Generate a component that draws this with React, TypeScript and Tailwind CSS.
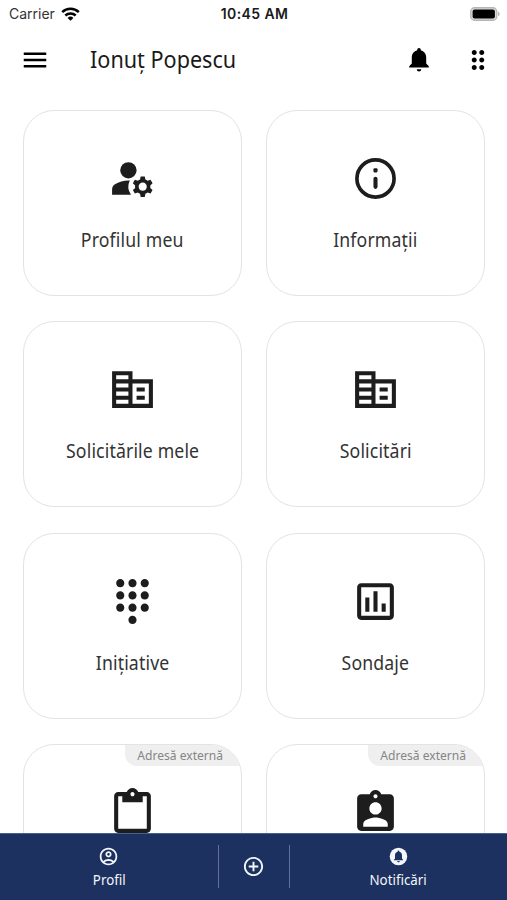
import React from 'react';
import type { IconType } from 'react-icons';
import {
  MdAddCircleOutline,
  MdAssignmentInd,
  MdCorporateFare,
  MdDialpad,
  MdDragIndicator,
  MdManageAccounts,
  MdMenu,
  MdOutlineAccountCircle,
  MdOutlineAssessment,
  MdOutlineContentPaste,
} from 'react-icons/md';

const InfoIcon: React.FC<{ className?: string }> = ({ className }) => (
  <svg className={className} viewBox="0 0 24 24" fill="none" stroke="currentColor">
    <circle cx="12" cy="12" r="9.1" strokeWidth={1.8} />
    <path strokeWidth={2} strokeLinecap="round" d="M12 12.1v4" />
    <rect x="11" y="7" width="2" height="2" rx="0.5" fill="currentColor" stroke="none" />
  </svg>
);

const BellIcon: React.FC<{ className?: string }> = ({ className }) => (
  <svg className={className} viewBox="0 0 20 24" fill="currentColor">
    <path d="M10 0a1.8 1.8 0 0 0-1.8 1.8v.5C5 3.1 2.8 5.8 2.8 9.2v6.4L.2 18.2v1.3h19.6v-1.3l-2.6-2.6V9.2c0-3.4-2.2-6.1-5.4-6.9v-.5A1.8 1.8 0 0 0 10 0z" />
    <path d="M7.8 21.2h4.4c0 1.3-1 2.3-2.2 2.3s-2.2-1-2.2-2.3z" />
  </svg>
);

const BellCircleIcon: React.FC<{ className?: string }> = ({ className }) => (
  <svg className={className} viewBox="0 0 24 24" fill="currentColor">
    <circle cx="12" cy="12" r="10" />
    <path
      fill="#1c315f"
      d="M12 5.2c-.6 0-1 .4-1 1v.5c-1.9.5-3 2.1-3 4.1v3.6l-1.2 1.2v.7h10.4v-.7L16 14.4v-3.6c0-2-1.1-3.6-3-4.1v-.5c0-.6-.4-1-1-1zM10.6 17.2h2.8c0 .8-.6 1.4-1.4 1.4s-1.4-.6-1.4-1.4z"
    />
  </svg>
);

interface Tile {
  label?: string;
  icon: IconType | React.FC<{ className?: string }>;
  external?: boolean;
}

const tiles: Tile[] = [
  { label: 'Profilul meu', icon: MdManageAccounts },
  { label: 'Informații', icon: InfoIcon },
  { label: 'Solicitările mele', icon: MdCorporateFare },
  { label: 'Solicitări', icon: MdCorporateFare },
  { label: 'Inițiative', icon: MdDialpad },
  { label: 'Sondaje', icon: MdOutlineAssessment },
  { icon: MdOutlineContentPaste, external: true },
  { icon: MdAssignmentInd, external: true },
];

const StatusBar: React.FC = () => (
  <div className="grid h-7 shrink-0 grid-cols-3 items-center pl-[9px] pr-[7px] font-['Inter',sans-serif] text-sm text-black">
    <div className="flex items-center gap-1.5">
      <span className="text-[#333]">Carrier</span>
      <svg className="h-[14px] w-[19px]" viewBox="0 0 19 14" fill="none" stroke="currentColor" strokeWidth={2.5}>
        <path d="M1.2 5.2a12 12 0 0 1 16.6 0" />
        <path d="M4.3 8.5a7.5 7.5 0 0 1 10.4 0" />
        <path d="M9.5 13.8 6.6 10.9a4.2 4.2 0 0 1 5.8 0z" fill="currentColor" stroke="none" />
      </svg>
    </div>
    <span className="text-center font-semibold tracking-[0.4px] whitespace-nowrap text-[#1a1a1a]">10:45 AM</span>
    <div className="flex justify-end">
      <svg className="h-[14px] w-[30px]" viewBox="0 0 30 14">
        <rect x="0.75" y="0.75" width="26" height="12.5" rx="3.8" fill="#dcdcdc" stroke="#b5b5b5" strokeWidth={1.3} />
        <rect x="2.6" y="2.6" width="22.3" height="8.8" rx="2" fill="#000" />
        <path d="M28 4.8v4.4c1-.4 1.6-1.2 1.6-2.2s-.6-1.8-1.6-2.2z" fill="#b5b5b5" />
      </svg>
    </div>
  </div>
);

const Header: React.FC = () => (
  <header className="flex h-16 shrink-0 items-center pl-5 pr-[14px] text-black">
    <MdMenu className="h-[30px] w-[30px]" />
    <h1 className="mb-0.5 ml-10 origin-left scale-x-[0.9] text-2xl whitespace-nowrap text-[#1a1a1a]">Ionuț Popescu</h1>
    <div className="ml-auto flex items-center gap-[34px]">
      <BellIcon className="h-6 w-5" />
      <MdDragIndicator className="h-[30px] w-[30px]" />
    </div>
  </header>
);

const TileCard: React.FC<Tile> = ({ label, icon: Icon, external }) => (
  <div className="relative flex h-[186px] flex-col items-center overflow-hidden rounded-[31px] border border-[#e3e3e3] bg-white pt-[43px]">
    {external && (
      <div className="absolute top-0 right-0 flex h-[21px] w-[116px] items-center justify-center rounded-bl-xl bg-[#efefef] pr-1.5 text-[#858585]">
        <span className="scale-x-[0.93] text-[13px] whitespace-nowrap">Adresă externă</span>
      </div>
    )}
    <Icon className="h-[49px] w-[49px] shrink-0 text-[#1d1d1d]" />
    {label && (
      <span className="mt-[23px] scale-x-[0.93] text-[19px] leading-7 tracking-[0.15px] whitespace-nowrap text-[#333]">
        {label}
      </span>
    )}
  </div>
);

const BottomNav: React.FC = () => (
  <nav className="flex h-[67px] shrink-0 items-center border-t border-[#47618a] bg-[#1c315f] text-[#f3f6fb]">
    <div className="flex flex-1 flex-col items-center pt-0.5">
      <MdOutlineAccountCircle className="h-[21px] w-[21px]" />
      <span className="mt-[3px] scale-x-[0.95] text-sm">Profil</span>
    </div>
    <div className="mb-0.5 flex h-[43px] w-[72px] items-center justify-center border-x border-[#60709a]">
      <MdAddCircleOutline className="h-[23px] w-[23px]" />
    </div>
    <div className="flex flex-1 flex-col items-center pt-0.5">
      <BellCircleIcon className="h-[21px] w-[21px]" />
      <span className="mt-[3px] scale-x-[0.95] text-sm">Notificări</span>
    </div>
  </nav>
);

const App: React.FC = () => {
  return (
    <div className="flex h-screen flex-col overflow-hidden bg-white font-['Noto_Sans',sans-serif]">
      <StatusBar />
      <Header />
      <main className="min-h-0 flex-1 overflow-hidden pt-[18px] pr-[22px] pl-[23px]">
        <div className="grid grid-cols-2 gap-x-6 gap-y-[25.3px]">
          {tiles.map((tile, index) => (
            <TileCard key={index} {...tile} />
          ))}
        </div>
      </main>
      <BottomNav />
    </div>
  );
};

export default App;
